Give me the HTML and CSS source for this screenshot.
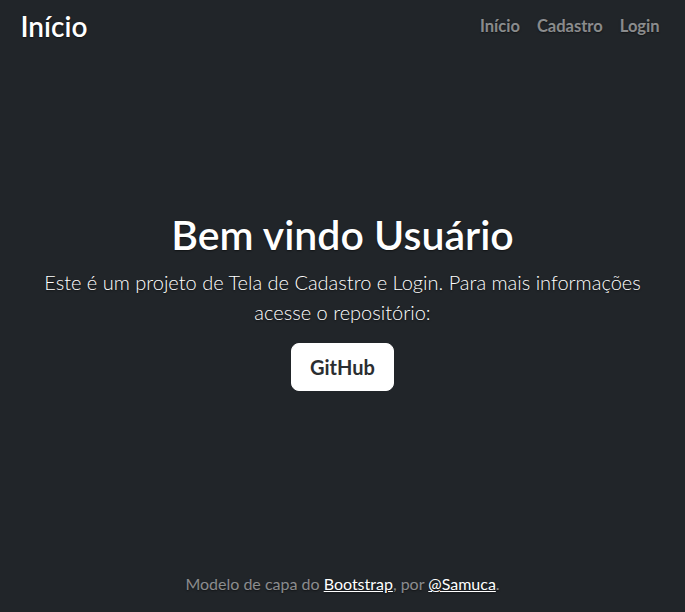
FILE: index.html
```html
<!DOCTYPE html>
<html lang="pt-br">
<head>
<meta charset="utf-8">
<title>Início</title>
<link rel="stylesheet" href="styles.css">
</head>
<body>
<div class="cover">
  <header class="masthead">
    <h3 class="brand">Início</h3>
    <nav class="nav">
      <a class="nav-link" href="#">Início</a>
      <a class="nav-link" href="#">Cadastro</a>
      <a class="nav-link" href="#">Login</a>
    </nav>
  </header>
  <main class="hero">
    <h1 class="title">Bem vindo Usuário</h1>
    <p class="lead">Este é um projeto de Tela de Cadastro e Login. Para mais informações acesse o repositório:</p>
    <p class="lead"><a href="#" class="btn">GitHub</a></p>
  </main>
  <footer class="foot">
    <p>Modelo de capa do <a href="#">Bootstrap</a>, por <a href="#"> @Samuca</a>.</p>
  </footer>
</div>
</body>
</html>
```

FILE: styles.css
```css
html, body {
  height: 100%;
}
body {
  margin: 0;
  background: #212529;
  color: #fff;
  font-family: "Lato", "Open Sans", sans-serif;
  font-size: 16px;
  line-height: 1.5;
  text-shadow: 0 0.05rem 0.1rem rgba(0, 0, 0, 0.5);
  box-sizing: border-box;
}
.cover {
  display: flex;
  flex-direction: column;
  max-width: 42em;
  height: 100%;
  margin: 0 auto;
  padding: 16px;
  box-sizing: border-box;
  text-align: center;
}
.masthead {
  margin-bottom: auto;
  display: flex;
  justify-content: space-between;
  align-items: center;
  margin-top: -6px;
}
.brand {
  margin: 0 0 0 -2px;
  font-size: 28px;
  font-weight: 600;
  line-height: 1.2;
}
.nav {
  display: flex;
  margin-right: 3px;
}
.nav-link {
  padding: 4px 0;
  margin-left: 17px;
  font-weight: 700;
  font-size: 16.5px;
  color: rgba(255, 255, 255, 0.5);
  text-decoration: none;
}
.hero {
  padding: 0 16px;
}
.title {
  margin: 0 0 8px;
  font-size: 41px;
  font-weight: 600;
  line-height: 1.17;
  padding-top: 2px;
}
.lead {
  margin: 0 0 16px;
  font-size: 20px;
  font-weight: 300;
}
.btn {
  display: inline-block;
  padding: 8px 18px;
  font-size: 20px;
  font-weight: 700;
  line-height: 1.5;
  color: #2b2e31;
  background: #fff;
  border: 1px solid #fff;
  border-radius: 8px;
  text-decoration: none;
  text-shadow: none;
}
.foot {
  margin-top: auto;
  color: rgba(255, 255, 255, 0.5);
}
.foot p {
  margin: 0;
}
.foot a {
  color: #fff;
}
```
